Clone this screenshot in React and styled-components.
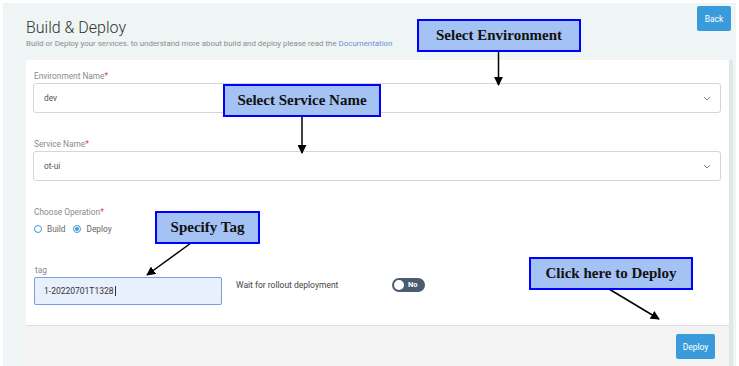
import React from 'react'
import styled, { createGlobalStyle } from 'styled-components'

const GlobalStyle = createGlobalStyle`
  html, body {
    margin: 0;
    padding: 0;
    background: #ffffff;
    font-family: Roboto, "Liberation Sans", sans-serif;
  }
  * {
    box-sizing: border-box;
  }
`

const Page = styled.div`
  position: relative;
  width: 739px;
  height: 366px;
  padding: 3px 3px 0 3px;
  overflow: hidden;
  background: #ffffff;
`

const Frame = styled.div`
  height: calc(100% + 3px);
  background: #eef5f4;
  display: flex;
  flex-direction: column;
`

const Header = styled.div`
  display: flex;
  justify-content: space-between;
  align-items: flex-start;
  padding: 0 5px 0 23px;
`

const TitleBlock = styled.div`
  padding-top: 17px;
`

const Title = styled.h1`
  margin: 0;
  font-size: 16px;
  line-height: 16px;
  font-weight: 300;
  color: #333;
`

const Subtitle = styled.p`
  margin: 3px 0 0;
  font-size: 7.9px;
  line-height: 10px;
  color: #8c8c8c;

  a {
    color: #6b8fdc;
    text-decoration: none;
  }
`

const Button = styled.button`
  border: none;
  border-radius: 2px;
  background: #3a9bdc;
  color: #ffffff;
  font-family: Roboto, "Liberation Sans", sans-serif;
  font-size: 8.5px;
  padding: 0;
  width: ${p => p.$w}px;
  height: 25px;
  margin-top: ${p => p.$top || 0}px;
  cursor: pointer;
`

const Card = styled.div`
  margin: 11px 3px 0 23px;
  flex: 1;
  background: #ffffff;
  border-right: 4px solid #e3e6e6;
  display: flex;
  flex-direction: column;
`

const CardBody = styled.div`
  padding: 11px 8px 20px 7px;
  display: flex;
  flex-direction: column;
`

const Label = styled.div`
  font-size: 8.3px;
  line-height: 10px;
  color: #8a8a8a;
  margin: ${p => p.$mt || 0}px 0 ${p => p.$mb || 2}px ${p => p.$ml || 1}px;

  span {
    color: #e0443c;
  }
`

const Select = styled.div`
  height: 30px;
  border: 1px solid #d6d6d6;
  border-radius: 3px;
  display: flex;
  align-items: center;
  justify-content: space-between;
  padding: 0 9px 0 10px;
  font-size: 8.3px;
  color: #555;
`

const RadioRow = styled.div`
  display: flex;
  align-items: center;
  gap: 8px;
  margin-left: 1px;
  height: 11px;
`

const RadioItem = styled.label`
  display: flex;
  align-items: center;
  gap: 5px;
  font-size: 8.3px;
  color: #666;
`

const RadioDot = styled.span`
  width: 8px;
  height: 8px;
  border-radius: 50%;
  border: 1px solid #3a9bdc;
  display: flex;
  align-items: center;
  justify-content: center;

  &::after {
    content: '';
    width: 4px;
    height: 4px;
    border-radius: 50%;
    background: ${p => (p.$checked ? '#3a9bdc' : 'transparent')};
  }
`

const TagRow = styled.div`
  display: flex;
  align-items: center;
  margin-top: 31px;
  padding-left: 1px;
`

const TagField = styled.div`
  display: flex;
  flex-direction: column;
`

const TagInput = styled.div`
  width: 188px;
  height: 28px;
  background: #e8f0fe;
  border: 1px solid #7b9ddf;
  border-radius: 2px;
  display: flex;
  align-items: center;
  padding-left: 9px;
  font-size: 8.5px;
  color: #333;
`

const Caret = styled.span`
  display: inline-block;
  width: 1px;
  height: 10px;
  background: #333;
  margin-left: 1px;
`

const WaitGroup = styled.div`
  display: flex;
  align-items: center;
  margin-left: 14px;
  margin-top: -1px;
`

const WaitText = styled.span`
  width: 156px;
  font-size: 8.5px;
  color: #444;
`

const Toggle = styled.div`
  width: 33px;
  height: 14px;
  border-radius: 7px;
  background: #4b5b72;
  display: flex;
  align-items: center;
  padding: 0 2px;
  gap: 4px;

  &::before {
    content: '';
    width: 10px;
    height: 10px;
    border-radius: 50%;
    background: #ffffff;
  }
`

const ToggleText = styled.span`
  font-size: 7.5px;
  font-weight: 700;
  color: #ffffff;
`

const Footer = styled.div`
  flex: 1;
  background: #f3f3f3;
  border-top: 1px solid #dedede;
  display: flex;
  justify-content: flex-end;
  padding: 8px 14px 0 0;
`

const Callout = styled.div`
  position: absolute;
  left: ${p => p.$x}px;
  top: ${p => p.$y}px;
  width: ${p => p.$w}px;
  height: ${p => p.$h}px;
  background: #a4c2f4;
  border: 2px solid #0000ff;
  display: flex;
  align-items: center;
  justify-content: center;
  font-family: "Liberation Serif", "DejaVu Serif", serif;
  font-weight: 700;
  font-size: 15px;
  color: #111;
  white-space: nowrap;
`

const Arrows = styled.svg`
  position: absolute;
  left: 0;
  top: 0;
  pointer-events: none;
`

const Chevron = () => (
  <svg width="8" height="5" viewBox="0 0 8 5">
    <path d="M1 1l3 3 3-3" fill="none" stroke="#777" strokeWidth="0.9" />
  </svg>
)

const arrows = [
  [498.5, 51, 498.5, 85],
  [302, 117, 302, 153],
  [191, 243, 147, 275],
  [609, 289, 659, 319],
]

export default function App() {
  return (
    <>
      <GlobalStyle />
      <Page>
        <Frame>
          <Header>
            <TitleBlock>
              <Title>Build &amp; Deploy</Title>
              <Subtitle>
                Build or Deploy your services. to understand more about build and deploy please read the{' '}
                <a href="#">Documentation</a>
              </Subtitle>
            </TitleBlock>
            <Button $w={34} $top={3}>Back</Button>
          </Header>
          <Card>
            <CardBody>
              <Label>Environment Name<span>*</span></Label>
              <Select>
                dev
                <Chevron />
              </Select>
              <Label $mt={26}>Service Name<span>*</span></Label>
              <Select>
                ot-ui
                <Chevron />
              </Select>
              <Label $mt={26} $mb={6}>Choose Operation<span>*</span></Label>
              <RadioRow>
                <RadioItem><RadioDot />Build</RadioItem>
                <RadioItem><RadioDot $checked />Deploy</RadioItem>
              </RadioRow>
              <TagRow>
                <TagField>
                  <Label $ml={0}>tag</Label>
                  <TagInput>1-20220701T1328<Caret /></TagInput>
                </TagField>
                <WaitGroup>
                  <WaitText>Wait for rollout deployment</WaitText>
                  <Toggle><ToggleText>No</ToggleText></Toggle>
                </WaitGroup>
              </TagRow>
            </CardBody>
            <Footer>
              <Button $w={39}>Deploy</Button>
            </Footer>
          </Card>
        </Frame>

        <Arrows width="739" height="366">
          <defs>
            <marker id="head" viewBox="0 0 10 10" refX="9" refY="5" markerWidth="6" markerHeight="6" orient="auto">
              <path d="M0 0L10 5L0 10z" fill="#000" />
            </marker>
          </defs>
          {arrows.map(([x1, y1, x2, y2], i) => (
            <line key={i} x1={x1} y1={y1} x2={x2} y2={y2} stroke="#000" strokeWidth="1.5" markerEnd="url(#head)" />
          ))}
        </Arrows>

        <Callout $x={417} $y={19} $w={164} $h={33}>Select Environment</Callout>
        <Callout $x={223} $y={84} $w={158} $h={33}>Select Service Name</Callout>
        <Callout $x={155} $y={211} $w={105} $h={33}>Specify Tag</Callout>
        <Callout $x={529} $y={257} $w={164} $h={33}>Click here to Deploy</Callout>
      </Page>
    </>
  )
}
